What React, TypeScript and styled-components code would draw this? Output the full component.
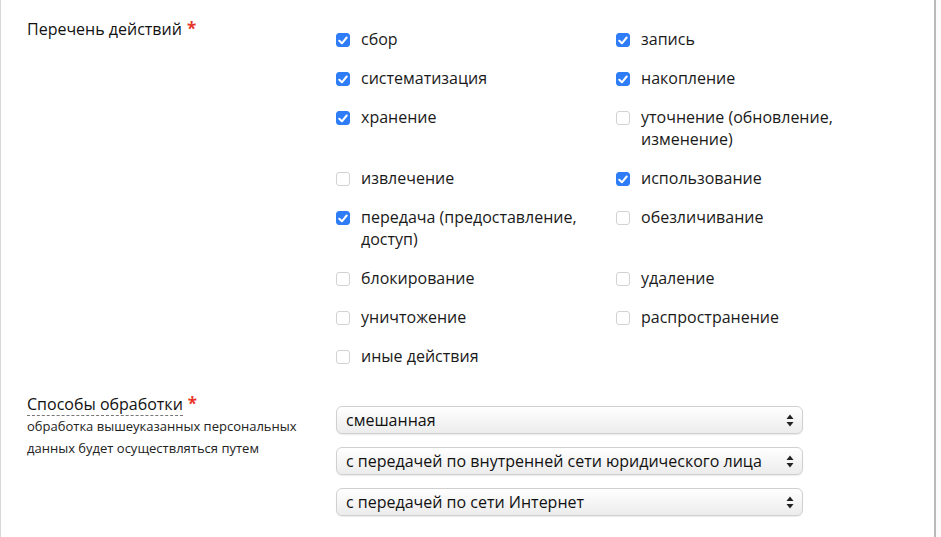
import React from "react";
import styled, { createGlobalStyle } from "styled-components";

const Global = createGlobalStyle`
  html, body { margin: 0; padding: 0; background: #fbfbfb; }
  body { font-family: "Open Sans", "Noto Sans", sans-serif; color: #1a1a1a; }
`;

const Page = styled.div`
  width: 936px;
  min-height: 537px;
  box-sizing: border-box;
  background: #fff;
  border-left: 1px solid #d8d8d8;
  border-right: 2px solid #b9b9b9;
  padding: 18px 0 0 26px;
`;

const Section = styled.div<{ $gap?: number }>`
  display: grid;
  grid-template-columns: 309px 1fr;
  margin-bottom: ${(p) => p.$gap ?? 0}px;
`;

const LabelBox = styled.div`
  display: flex;
  flex-direction: column;
`;

const Label = styled.div<{ $dashed?: boolean }>`
  font-size: 16px;
  line-height: 22px;
  color: #111;
  span.t {
    border-bottom: ${(p) => (p.$dashed ? "1px dashed #777" : "none")};
  }
`;

const Star = styled.span`
  color: #e8352c;
  margin-left: 5px;
  font-weight: 700;
  font-size: 17px;
`;

const Hint = styled.div`
  font-size: 13px;
  line-height: 22px;
  color: #222;
`;

const Grid = styled.div`
  display: grid;
  grid-template-columns: 280px 280px;
  row-gap: 17px;
  padding-top: 10px;
`;

const Item = styled.label`
  display: flex;
  align-items: flex-start;
  gap: 11px;
  font-size: 16px;
  line-height: 22px;
  color: #1a1a1a;
  padding-right: 20px;
`;

const Box = styled.span<{ $on: boolean }>`
  flex: none;
  width: 14px;
  height: 14px;
  margin-top: 5px;
  box-sizing: border-box;
  border-radius: 3px;
  display: flex;
  align-items: center;
  justify-content: center;
  background: ${(p) => (p.$on ? "#2f7df6" : "#fff")};
  border: 1px solid ${(p) => (p.$on ? "#2f7df6" : "#d2d2d2")};
`;

const Selects = styled.div`
  display: flex;
  flex-direction: column;
  gap: 13px;
  padding-top: 13px;
  width: 467px;
`;

const Select = styled.div`
  height: 28px;
  box-sizing: border-box;
  border: 1px solid #d0d0d0;
  border-radius: 6px;
  background: linear-gradient(#ffffff, #ececec);
  box-shadow: 0 1px 1px rgba(0, 0, 0, 0.08);
  display: flex;
  align-items: center;
  justify-content: space-between;
  padding: 0 8px 0 9px;
  font-size: 16px;
  color: #111;
`;

const Check = () => (
  <svg width="10" height="9" viewBox="0 0 10 9">
    <path d="M1.3 4.8 L3.9 7.3 L8.7 1.5" fill="none" stroke="#fff" strokeWidth="2" strokeLinecap="round" strokeLinejoin="round" />
  </svg>
);

const Arrows = () => (
  <svg width="8" height="13" viewBox="0 0 8 13">
    <path d="M4 0.5 L7.5 5 L0.5 5 Z" fill="#222" />
    <path d="M4 12.5 L7.5 8 L0.5 8 Z" fill="#222" />
  </svg>
);

const items: [string, boolean][] = [
  ["сбор", true],
  ["запись", true],
  ["систематизация", true],
  ["накопление", true],
  ["хранение", true],
  ["уточнение (обновление, изменение)", false],
  ["извлечение", false],
  ["использование", true],
  ["передача (предоставление, доступ)", true],
  ["обезличивание", false],
  ["блокирование", false],
  ["удаление", false],
  ["уничтожение", false],
  ["распространение", false],
  ["иные действия", false],
];

const options = [
  "смешанная",
  "с передачей по внутренней сети юридического лица",
  "с передачей по сети Интернет",
];

export default function App() {
  return (
    <>
      <Global />
      <Page>
        <Section $gap={26}>
          <LabelBox>
            <Label>
              <span className="t">Перечень действий</span>
              <Star>*</Star>
            </Label>
          </LabelBox>
          <Grid>
            {items.map(([t, on]) => (
              <Item key={t}>
                <Box $on={on}>{on && <Check />}</Box>
                <span>{t}</span>
              </Item>
            ))}
          </Grid>
        </Section>
        <Section>
          <LabelBox>
            <Label $dashed>
              <span className="t">Способы обработки</span>
              <Star>*</Star>
            </Label>
            <Hint>
              обработка вышеуказанных персональных
              <br />
              данных будет осуществляться путем
            </Hint>
          </LabelBox>
          <Selects>
            {options.map((o) => (
              <Select key={o}>
                <span>{o}</span>
                <Arrows />
              </Select>
            ))}
          </Selects>
        </Section>
      </Page>
    </>
  );
}
